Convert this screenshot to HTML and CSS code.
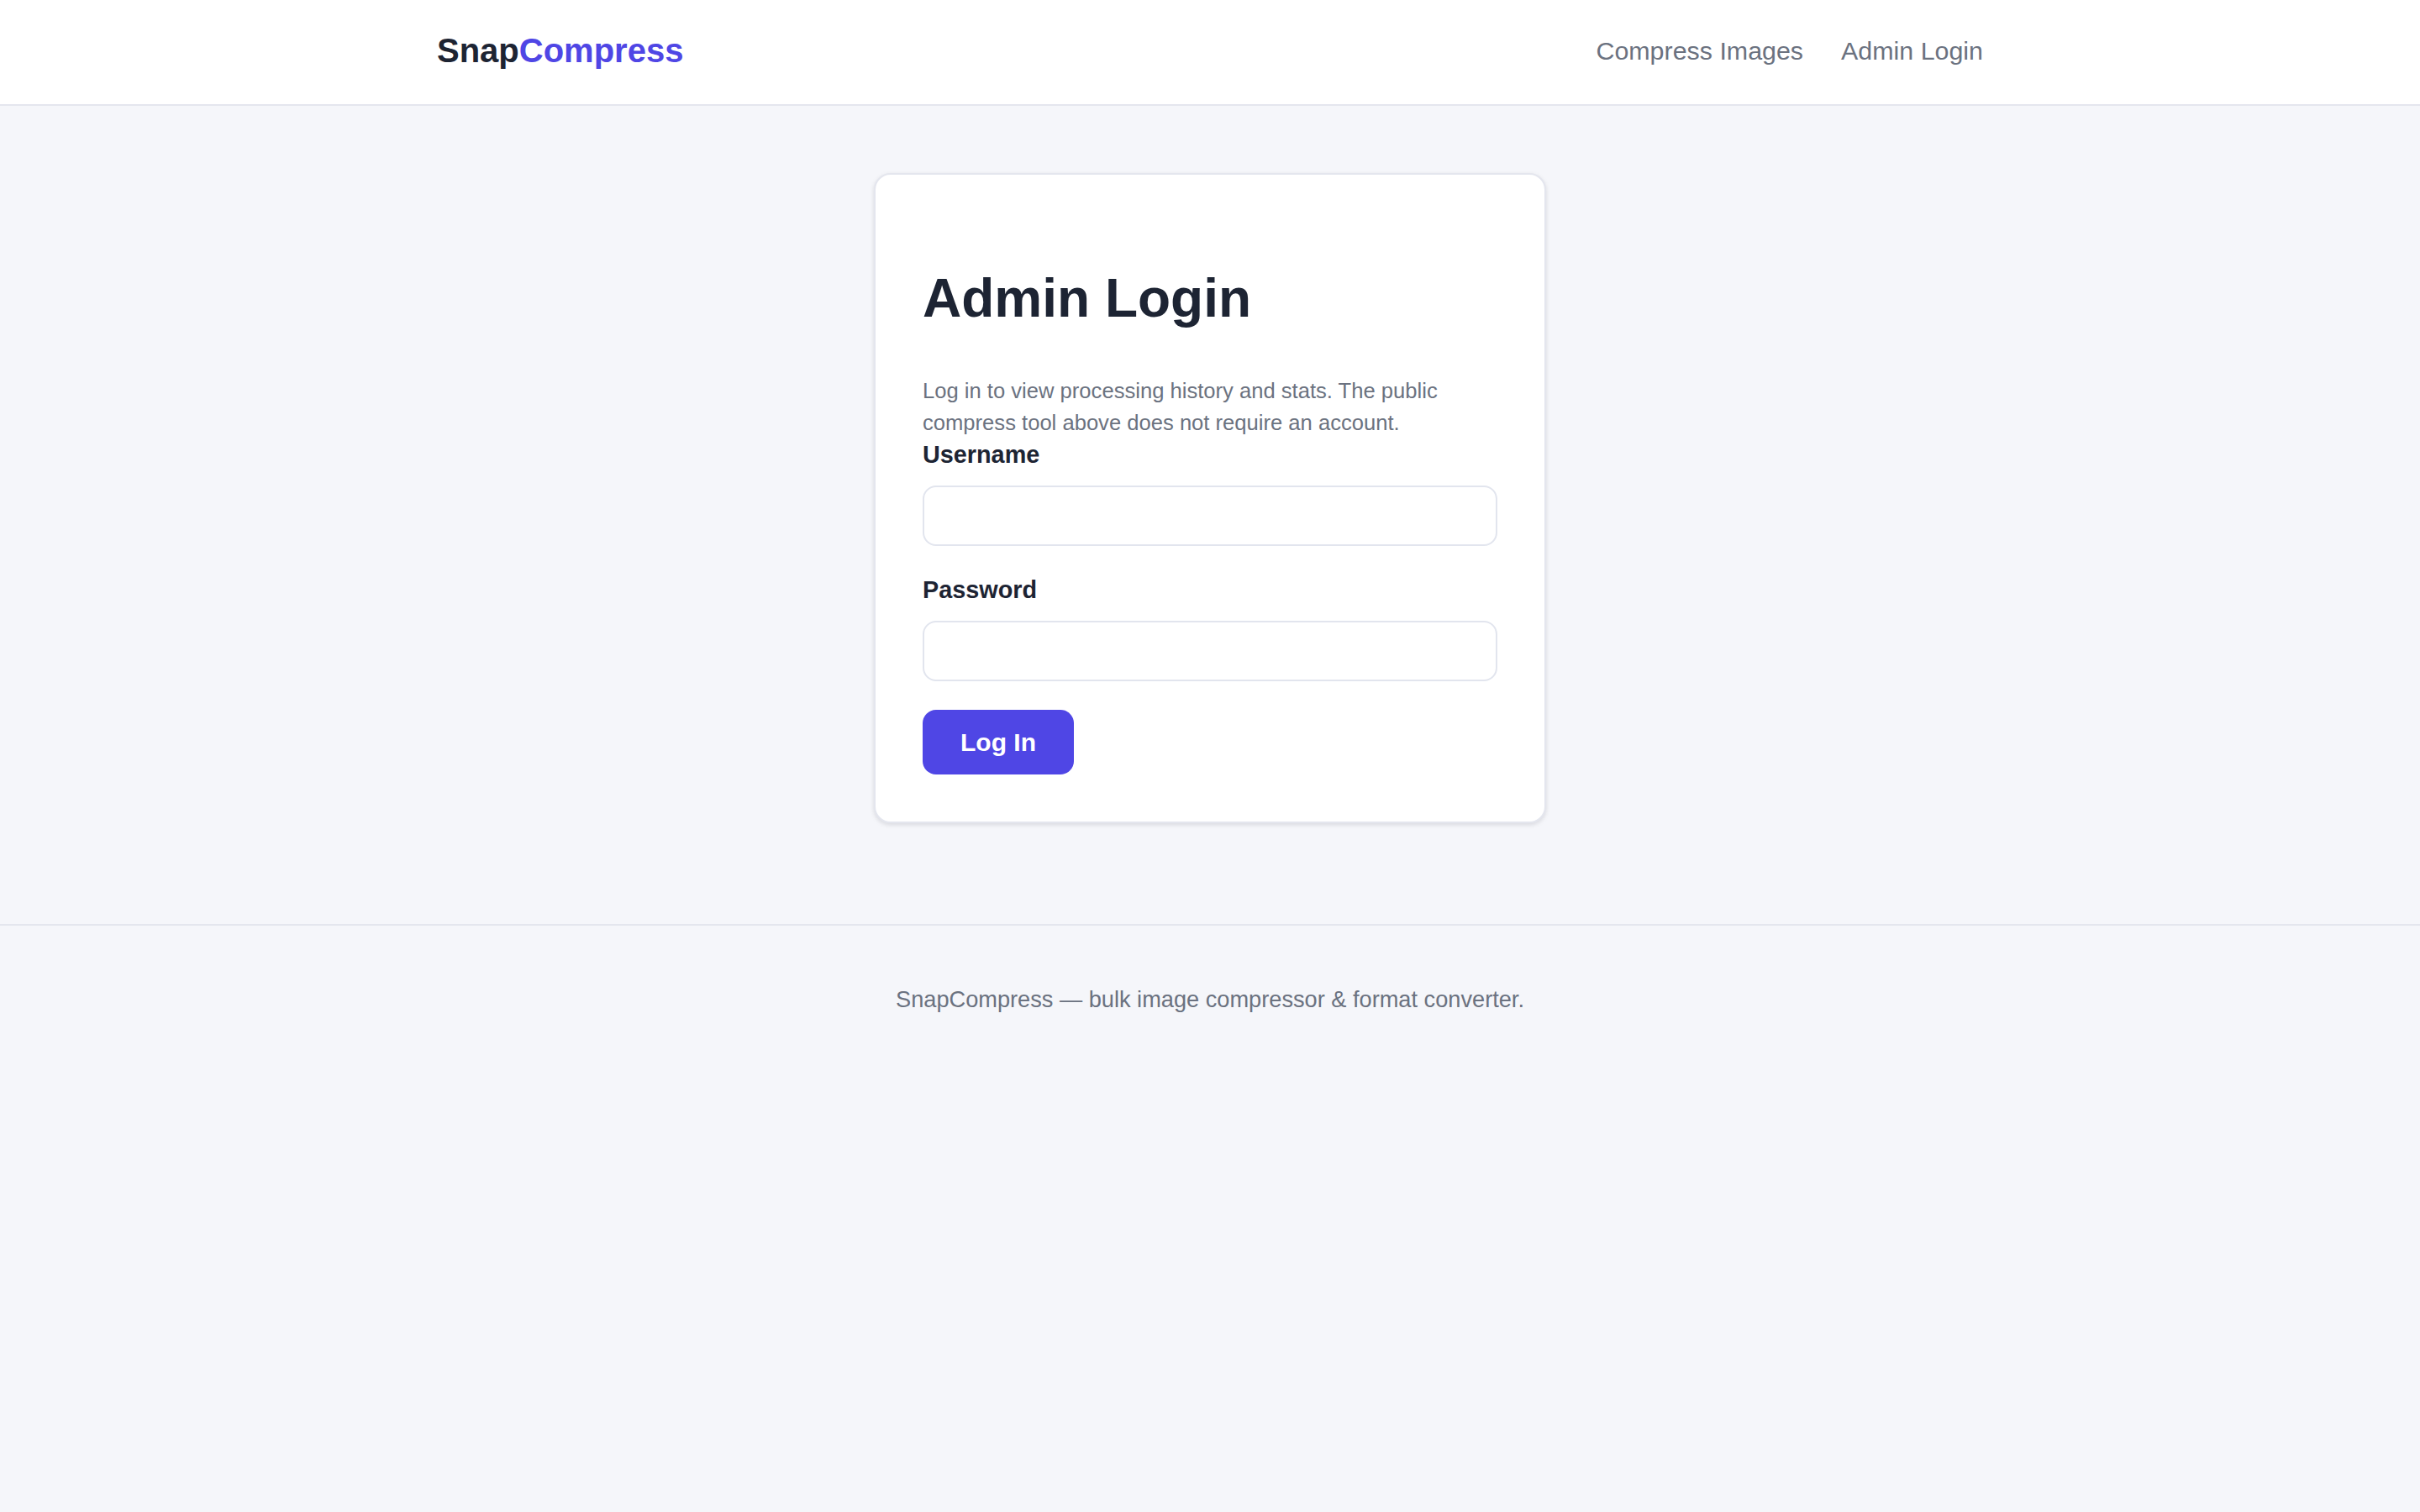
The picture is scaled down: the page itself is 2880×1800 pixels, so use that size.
FILE: index.html
```html
<!DOCTYPE html>
<html lang="en">
<head>
<meta charset="utf-8">
<meta name="viewport" content="width=device-width, initial-scale=1">
<title>Admin Login — SnapCompress</title>
<link rel="stylesheet" href="styles.css">
</head>
<body>
<header class="site-header">
  <div class="container header-inner">
    <a class="logo" href="#">Snap<span class="logo-accent">Compress</span></a>
    <nav class="nav">
      <a class="nav-link" href="#">Compress Images</a>
      <a class="nav-link" href="#">Admin Login</a>
    </nav>
  </div>
</header>

<main class="main">
  <div class="card">
    <h1 class="card-title">Admin Login</h1>
    <p class="muted">Log in to view processing history and stats. The public compress tool above does not require an account.</p>
    <form class="login-form" onsubmit="return false;">
      <div class="field">
        <label class="field-label" for="username">Username</label>
        <input class="field-input" id="username" type="text" name="username">
      </div>
      <div class="field">
        <label class="field-label" for="password">Password</label>
        <input class="field-input" id="password" type="password" name="password">
      </div>
      <button class="btn-primary" type="submit">Log In</button>
    </form>
  </div>
</main>

<footer class="site-footer">
  <p class="footer-text">SnapCompress — bulk image compressor &amp; format converter.</p>
</footer>
</body>
</html>
```

FILE: styles.css
```css
* {
  box-sizing: border-box;
}

html, body {
  margin: 0;
  padding: 0;
}

body {
  font-family: "Liberation Sans", Arial, Helvetica, sans-serif;
  font-size: 32px;
  line-height: 1.5;
  color: #1d2433;
  background: #f5f6fa;
  min-height: 100vh;
}

a {
  text-decoration: none;
  color: inherit;
}

.container {
  max-width: 1920px;
  margin: 0 auto;
  padding: 0 40px;
}

/* Header */
.site-header {
  background: #ffffff;
  border-bottom: 2px solid #e4e6ee;
}

.header-inner {
  display: flex;
  align-items: center;
  justify-content: space-between;
  padding-top: 30px;
  padding-bottom: 34px;
}

.logo {
  font-size: 40px;
  font-weight: 700;
  line-height: 60px;
  color: #1d2433;
}

.logo-accent {
  color: #4f46e5;
}

.nav {
  display: flex;
  align-items: center;
  gap: 45px;
}

.nav-link {
  font-size: 30.4px;
  line-height: 1.4;
  color: #6b7280;
}

/* Main */
.main {
  padding: 80px 40px 120px;
}

.card {
  width: 800px;
  margin: 0 auto;
  background: #ffffff;
  border: 2px solid #e4e6ee;
  border-radius: 20px;
  padding: 56px;
  box-shadow: 0 2px 6px rgba(20, 24, 40, 0.08), 0 2px 4px rgba(20, 24, 40, 0.05);
}

.card-title {
  font-size: 64px;
  font-weight: 700;
  line-height: 1.5;
  margin: 0.67em 0;
  color: #1d2433;
}

.muted {
  font-size: 25.6px;
  line-height: 1.5;
  color: #6b7280;
  margin: 25.6px 0 0;
}

.login-form {
  margin: 0;
}

.field {
  margin-bottom: 34px;
}

.field-label {
  display: block;
  font-size: 28.8px;
  font-weight: 700;
  line-height: 1.3;
  margin-bottom: 18px;
  color: #1d2433;
}

.field-input {
  display: block;
  width: 100%;
  height: 72px;
  padding: 16px 20px;
  font-family: inherit;
  font-size: 30px;
  border: 2px solid #e2e5ee;
  border-radius: 16px;
  background: #ffffff;
  color: #1d2433;
  outline: none;
}

.btn-primary {
  display: inline-block;
  font-family: inherit;
  font-size: 30px;
  font-weight: 700;
  line-height: 1.5;
  padding: 16px 45px;
  color: #ffffff;
  background: #4f46e5;
  border: none;
  border-radius: 16px;
  cursor: pointer;
}

/* Footer */
.site-footer {
  border-top: 2px solid #e4e6ee;
  padding: 66px 40px 64px;
  text-align: center;
}

.footer-text {
  margin: 0;
  font-size: 27.2px;
  line-height: 1.6;
  color: #6b7280;
}
```
